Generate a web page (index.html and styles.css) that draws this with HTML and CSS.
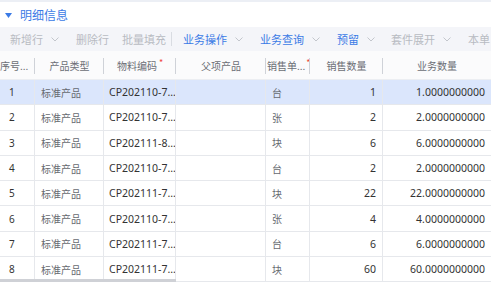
FILE: index.html
```html
<!DOCTYPE html>
<html lang="zh">
<head>
<meta charset="utf-8">
<link rel="stylesheet" href="styles.css">
</head>
<body>
<div class="panel">
  <div class="title-bar">
    <svg class="caret" width="7" height="5" viewBox="0 0 7 5"><path d="M0 0H7L3.5 5Z" fill="#3b7be6"/></svg>
    <span class="title">明细信息</span>
  </div>
  <div class="toolbar">
    <span class="tb-item dis chev-item">新增行<svg class="chev" width="8" height="5" viewBox="0 0 8 5"><path d="M0.5 0.5L4 4L7.5 0.5" fill="none" stroke="#c3c6cc" stroke-width="1"/></svg></span>
    <span class="tb-item dis">删除行</span>
    <span class="tb-item dis last">批量填充</span>
    <span class="tb-sep"></span>
    <span class="tb-item act chev-item">业务操作<svg class="chev" width="8" height="5" viewBox="0 0 8 5"><path d="M0.5 0.5L4 4L7.5 0.5" fill="none" stroke="#c3c6cc" stroke-width="1"/></svg></span>
    <span class="tb-item act chev-item">业务查询<svg class="chev" width="8" height="5" viewBox="0 0 8 5"><path d="M0.5 0.5L4 4L7.5 0.5" fill="none" stroke="#c3c6cc" stroke-width="1"/></svg></span>
    <span class="tb-item act chev-item short">预留<svg class="chev" width="8" height="5" viewBox="0 0 8 5"><path d="M0.5 0.5L4 4L7.5 0.5" fill="none" stroke="#c3c6cc" stroke-width="1"/></svg></span>
    <span class="tb-item dis chev-item">套件展开<svg class="chev" width="8" height="5" viewBox="0 0 8 5"><path d="M0.5 0.5L4 4L7.5 0.5" fill="none" stroke="#c3c6cc" stroke-width="1"/></svg></span>
    <span class="tb-item dis">本单</span>
  </div>
  <div class="grid">
    <div class="row head">
      <div class="hc c-no">序号...</div>
      <div class="hc">产品类型</div>
      <div class="hc">物料编码<i class="req">*</i></div>
      <div class="hc">父项产品</div>
      <div class="hc left">销售单...<i class="req">*</i></div>
      <div class="hc">销售数量</div>
      <div class="hc">业务数量</div>
    </div>
    <div class="body">
      <div class="row sel"><div class="c num">1</div><div class="c">标准产品</div><div class="c code">CP202110-7...</div><div class="c"></div><div class="c">台</div><div class="c r">1</div><div class="c r">1.0000000000</div></div>
      <div class="row"><div class="c num">2</div><div class="c">标准产品</div><div class="c code">CP202110-7...</div><div class="c"></div><div class="c">张</div><div class="c r">2</div><div class="c r">2.0000000000</div></div>
      <div class="row"><div class="c num">3</div><div class="c">标准产品</div><div class="c code">CP202111-8...</div><div class="c"></div><div class="c">块</div><div class="c r">6</div><div class="c r">6.0000000000</div></div>
      <div class="row"><div class="c num">4</div><div class="c">标准产品</div><div class="c code">CP202110-7...</div><div class="c"></div><div class="c">台</div><div class="c r">2</div><div class="c r">2.0000000000</div></div>
      <div class="row"><div class="c num">5</div><div class="c">标准产品</div><div class="c code">CP202111-7...</div><div class="c"></div><div class="c">块</div><div class="c r">22</div><div class="c r">22.0000000000</div></div>
      <div class="row"><div class="c num">6</div><div class="c">标准产品</div><div class="c code">CP202110-7...</div><div class="c"></div><div class="c">张</div><div class="c r">4</div><div class="c r">4.0000000000</div></div>
      <div class="row"><div class="c num">7</div><div class="c">标准产品</div><div class="c code">CP202111-7...</div><div class="c"></div><div class="c">台</div><div class="c r">6</div><div class="c r">6.0000000000</div></div>
      <div class="row"><div class="c num">8</div><div class="c">标准产品</div><div class="c code">CP202111-7...</div><div class="c"></div><div class="c">块</div><div class="c r">60</div><div class="c r">60.0000000000</div></div>
      <div class="hscroll"></div>
    </div>
  </div>
</div>
</body>
</html>
```
FILE: styles.css
```css
* { box-sizing: border-box; }
html, body { margin: 0; padding: 0; background: #ffffff; }
body {
  width: 491px;
  height: 282px;
  overflow: hidden;
  font-family: "Noto Sans", "Noto Sans CJK SC", sans-serif;
}
.panel { width: 491px; }
.title-bar {
  height: 27px;
  border-top: 2px solid #eceff5;
  display: flex;
  align-items: center;
  padding-left: 5px;
}
.caret { margin-right: 8px; margin-top: 1px; }
.title {
  font-family: "Noto Sans CJK SC", sans-serif;
  font-size: 12px;
  color: #3b7be6;
  line-height: 1;
}
.toolbar {
  height: 24px;
  background: #f4f5f9;
  display: flex;
  align-items: center;
  padding-left: 10px;
  white-space: nowrap;
  overflow: hidden;
  font-family: "Noto Sans CJK SC", sans-serif;
  font-size: 11px;
  line-height: 1;
}
.tb-item { display: inline-flex; align-items: center; margin-right: 13px; flex: none; }
.tb-item.chev-item { margin-right: 17px; }
.tb-item.short { margin-right: 16px; }
.tb-item.last { margin-right: 5px; }
.tb-item.dis { color: #b8bbc2; }
.tb-item.act { color: #3b7be6; }
.chev { margin-left: 8px; }
.tb-sep { width: 1px; height: 14px; background: #d9dce2; margin-right: 11px; flex: none; }

.grid { width: 491px; }
.row {
  display: grid;
  grid-template-columns: 35px 69px 72px 90px 44px 73px 108px;
  height: 25.3px;
  border-bottom: 1px solid #e6e8ec;
}
.row.head {
  height: 29px;
  background: #fbfbfc;
  border-bottom: 1px solid #eceef2;
}
.hc {
  position: relative;
  display: flex;
  align-items: center;
  justify-content: center;
  font-family: "Noto Sans CJK SC", sans-serif;
  font-size: 10px;
  color: #6b6e75;
  white-space: nowrap;
  overflow: visible;
}
.hc::after {
  content: "";
  position: absolute;
  right: 0;
  top: 7px;
  height: 16px;
  width: 1px;
  background: #cfd2d8;
}
.hc:last-child::after { display: none; }
.hc.c-no { justify-content: flex-start; }
.hc.left { justify-content: flex-start; padding-left: 1px; }
.req {
  font-style: normal;
  color: #f0473e;
  font-size: 9px;
  align-self: flex-start;
  margin-top: 5px;
  margin-left: 2px;
}
.hc.left .req { margin-left: 1px; }

.body {
  position: relative;
  height: 202px;
  overflow: hidden;
}
.c {
  display: flex;
  align-items: center;
  padding-left: 6px;
  border-right: 1px solid #e6e8ec;
  font-family: "Noto Sans CJK SC", sans-serif;
  font-size: 10px;
  color: #666a70;
  white-space: nowrap;
  overflow: hidden;
}
.c:last-child { border-right: none; }
.c.num { padding-left: 9px; font-family: "Noto Sans", sans-serif; color: #333; font-size: 10px; }
.c.code { padding-left: 5px; font-family: "Noto Sans", sans-serif; color: #333; font-size: 10.5px; }
.c.r {
  justify-content: flex-end;
  padding-left: 0;
  padding-right: 6px;
  font-family: "Noto Sans", sans-serif;
  font-size: 10.5px;
  color: #333;
}
.row.sel { background: #dbe6fc; }
.hscroll {
  position: absolute;
  left: 0;
  bottom: 0;
  width: 176px;
  height: 3px;
  background: #cfd1d6;
}
```
